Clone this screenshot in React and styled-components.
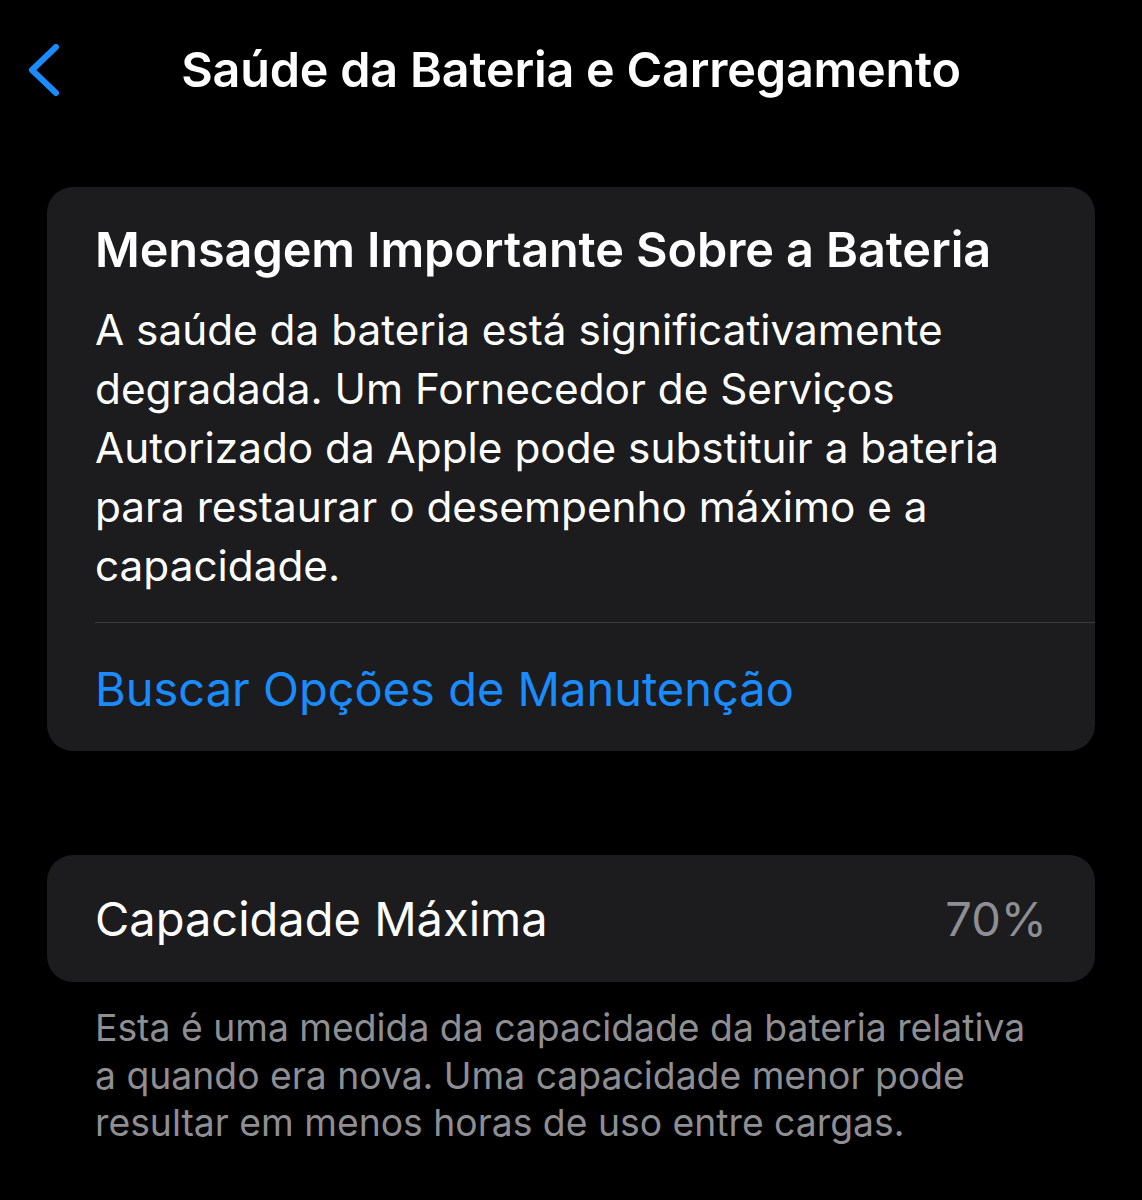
import React from 'react';
import styled, { createGlobalStyle } from 'styled-components';

const Global = createGlobalStyle`
  html, body {
    margin: 0;
    padding: 0;
    background: #000;
  }
  body {
    font-family: Inter, "Noto Sans", sans-serif;
    -webkit-font-smoothing: antialiased;
  }
`;

const Screen = styled.div`
  width: 1142px;
  min-height: 1200px;
  background: #000;
  color: #fff;
  display: flex;
  flex-direction: column;
`;

const NavBar = styled.div`
  height: 142px;
  display: grid;
  grid-template-columns: 130px 1fr 130px;
  align-items: start;
  padding-top: 40px;
  box-sizing: border-box;
`;

const BackButton = styled.button`
  background: none;
  border: none;
  padding: 0 0 0 26px;
  margin: 0;
  height: 60px;
  display: flex;
  align-items: center;
  cursor: pointer;
`;

const Title = styled.h1`
  margin: 0;
  text-align: center;
  font-size: 48.5px;
  font-weight: 600;
  letter-spacing: -0.2px;
  line-height: 60px;
  white-space: nowrap;
`;

const Content = styled.div`
  padding: 45px 47px 0;
  display: flex;
  flex-direction: column;
`;

const Card = styled.section`
  background: #1c1c1e;
  border-radius: 26px;
  overflow: hidden;
`;

const MessageBody = styled.div`
  padding: 34px 48px 27px;
`;

const CardTitle = styled.h2`
  margin: 0 0 21px;
  font-size: 48.6px;
  font-weight: 600;
  letter-spacing: -0.1px;
  line-height: 58px;
  white-space: nowrap;
`;

const Paragraph = styled.p`
  margin: 0;
  font-size: 42.3px;
  font-weight: 400;
  line-height: 59px;
  white-space: nowrap;
`;

const Separator = styled.div`
  height: 1px;
  background: #3a3a3c;
  margin-left: 48px;
`;

const LinkRow = styled.a`
  display: block;
  padding: 38px 48px 34px;
  font-size: 47px;
  line-height: 56px;
  color: #1a8cff;
  text-decoration: none;
  white-space: nowrap;
`;

const Spacer = styled.div`
  height: ${p => p.size}px;
`;

const ValueRow = styled.div`
  height: 127px;
  display: flex;
  align-items: center;
  justify-content: space-between;
  padding: 0 48px;
  font-size: 47px;
`;

const Value = styled.span`
  color: #8e8e93;
`;

const Footnote = styled.p`
  margin: 22px 48px 0;
  font-size: 37.3px;
  line-height: 47.5px;
  color: #8e8e93;
  white-space: nowrap;
`;

export default function App() {
  return (
    <Screen>
      <Global />
      <NavBar>
        <BackButton aria-label="Voltar">
          <svg width="34" height="56" viewBox="0 0 34 56">
            <path d="M30 5 L6 28 L30 51" fill="none" stroke="#1a8cff" strokeWidth="6" strokeLinecap="round" strokeLinejoin="round" />
          </svg>
        </BackButton>
        <Title>Saúde da Bateria e Carregamento</Title>
        <div />
      </NavBar>
      <Content>
        <Card>
          <MessageBody>
            <CardTitle>Mensagem Importante Sobre a Bateria</CardTitle>
            <Paragraph>
              A saúde da bateria está significativamente<br />
              degradada. Um Fornecedor de Serviços<br />
              Autorizado da Apple pode substituir a bateria<br />
              para restaurar o desempenho máximo e a<br />
              capacidade.
            </Paragraph>
          </MessageBody>
          <Separator />
          <LinkRow href="#">Buscar Opções de Manutenção</LinkRow>
        </Card>
        <Spacer size={104} />
        <Card>
          <ValueRow>
            <span>Capacidade Máxima</span>
            <Value>70%</Value>
          </ValueRow>
        </Card>
        <Footnote>
          Esta é uma medida da capacidade da bateria relativa<br />
          a quando era nova. Uma capacidade menor pode<br />
          resultar em menos horas de uso entre cargas.
        </Footnote>
      </Content>
    </Screen>
  );
}
